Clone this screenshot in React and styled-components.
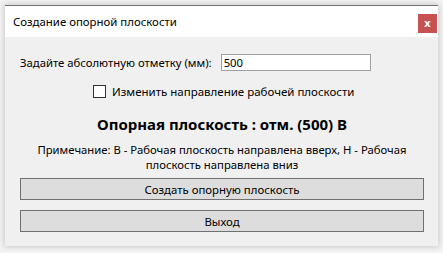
import React, { useState } from 'react';
import styled, { createGlobalStyle } from 'styled-components';

const GlobalStyle = createGlobalStyle`
  html, body {
    margin: 0;
    padding: 0;
    background: #f4f4f4;
  }
  body {
    font-family: 'Noto Sans', 'Open Sans', sans-serif;
    color: #000;
  }
`;

const Page = styled.div`
  width: 443px;
  height: 253px;
  padding: 5px;
  box-sizing: border-box;
  overflow: hidden;
`;

const Window = styled.div`
  width: 433px;
  height: 241px;
  background: #f0f0f0;
  border-top: 1px solid #707070;
  box-shadow: 0 0 6px 1px rgba(0, 0, 0, 0.18);
  display: flex;
  flex-direction: column;
  box-sizing: border-box;
`;

const TitleBar = styled.div`
  height: 31px;
  background: #fff;
  display: flex;
  align-items: center;
  justify-content: space-between;
  padding: 0 1px 0 8px;
  box-sizing: border-box;
`;

const TitleText = styled.div`
  font-size: 11.4px;
`;

const CloseButton = styled.div`
  width: 19px;
  height: 19px;
  margin-top: 4px;
  background: #c75050;
  color: #fff;
  font-size: 11px;
  font-weight: bold;
  display: flex;
  align-items: center;
  justify-content: center;
  line-height: 1;
  padding-bottom: 2px;
  box-sizing: border-box;
`;

const Body = styled.div`
  padding: 17px 14px 0 15px;
  display: flex;
  flex-direction: column;
`;

const InputRow = styled.div`
  display: flex;
  align-items: center;
  gap: 9px;
  font-size: 11.3px;
`;

const TextInput = styled.input`
  width: 150px;
  height: 17px;
  box-sizing: border-box;
  border: 1px solid #a0a0a0;
  background: #fff;
  font: inherit;
  font-size: 11.3px;
  padding: 0 2px;
  outline: none;
`;

const CheckRow = styled.label`
  display: flex;
  align-items: center;
  gap: 6px;
  font-size: 11.5px;
  margin: 13px 0 0 73px;
`;

const Box = styled.span`
  width: 13px;
  height: 13px;
  border: 1px solid #333;
  background: #fff;
  box-sizing: border-box;
`;

const Heading = styled.div`
  margin-top: 15px;
  text-align: center;
  font-size: 15px;
  font-weight: bold;
`;

const Note = styled.div`
  margin: 8px 0 0;
  padding: 0 6px;
  text-align: center;
  font-size: 11.3px;
  line-height: 15px;
`;

const Button = styled.button`
  width: 404px;
  height: 22px;
  box-sizing: border-box;
  border: 1px solid #707070;
  background: #dddddd;
  font: inherit;
  font-size: 11.4px;
  color: #000;
  padding: 0;
  margin-top: ${(p) => p.$gap}px;
`;

export default function App() {
  const [value, setValue] = useState('500');
  return (
    <Page>
      <GlobalStyle />
      <Window>
        <TitleBar>
          <TitleText>Создание опорной плоскости</TitleText>
          <CloseButton>x</CloseButton>
        </TitleBar>
        <Body>
          <InputRow>
            <span>Задайте абсолютную отметку (мм):</span>
            <TextInput value={value} onChange={(e) => setValue(e.target.value)} />
          </InputRow>
          <CheckRow>
            <Box />
            <span>Изменить направление рабочей плоскости</span>
          </CheckRow>
          <Heading>Опорная плоскость : отм. (500) В</Heading>
          <Note>
            Примечание: В - Рабочая плоскость направлена вверх, Н - Рабочая плоскость направлена вниз
          </Note>
          <Button $gap={6}>Создать опорную плоскость</Button>
          <Button $gap={10}>Выход</Button>
        </Body>
      </Window>
    </Page>
  );
}
